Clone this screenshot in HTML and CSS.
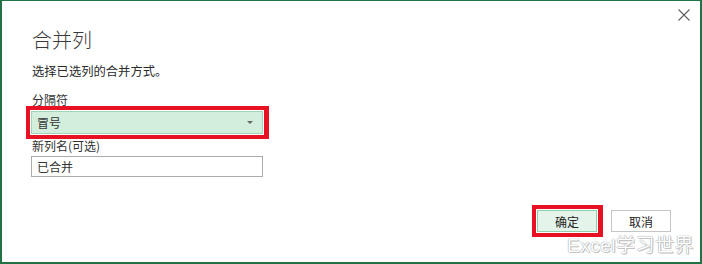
FILE: index.html
```html
<!DOCTYPE html>
<html lang="zh-CN">
<head>
<meta charset="utf-8">
<title>合并列</title>
<link rel="stylesheet" href="styles.css">
</head>
<body>
<div class="dialog">
  <div class="titlebar">
    <span class="close" aria-label="关闭">
      <svg width="12" height="12" viewBox="0 0 12 12"><path d="M0.5 0.5 L11.5 11.5 M11.5 0.5 L0.5 11.5" stroke="#5f5f5f" stroke-width="1.1" fill="none"/></svg>
    </span>
  </div>
  <div class="content">
    <h1 class="title">合并列</h1>
    <p class="desc">选择已选列的合并方式。</p>
    <div class="label">分隔符</div>
    <div class="mark mark-select">
      <div class="select">
        <span>冒号</span>
        <span class="arrow"></span>
      </div>
    </div>
    <div class="label label-name">新列名(可选)</div>
    <div class="input">已合并</div>
  </div>
  <div class="footer">
    <div class="mark">
      <div class="btn btn-ok">确定</div>
    </div>
    <div class="btn btn-cancel">取消</div>
  </div>
  <div class="watermark">Excel学习世界</div>
</div>
</body>
</html>
```
FILE: styles.css
```css
* { box-sizing: border-box; }
html, body { margin: 0; padding: 0; background: #fff; }
body {
  font-family: "Noto Sans CJK SC", "Noto Sans", sans-serif;
  color: #333;
  font-size: 12px;
}
.dialog {
  position: relative;
  width: 702px;
  height: 264px;
  border: 1px solid #217346;
  border-left-width: 2px;
  border-right-width: 2px;
  border-bottom-width: 2px;
  display: flex;
  flex-direction: column;
  overflow: hidden;
}
.titlebar {
  height: 20px;
  padding-top: 8px;
  padding-right: 10px;
  display: flex;
  justify-content: flex-end;
}
.close { display: block; width: 12px; height: 12px; }
.close svg { display: block; }
.content {
  padding-left: 30px;
  display: flex;
  flex-direction: column;
  align-items: flex-start;
}
.title {
  margin: 7px 0 0 0;
  font-size: 20px;
  line-height: 24px;
  font-weight: 300;
  color: #3a3a3a;
}
.desc {
  margin: 11px 0 0 0;
  font-size: 12.3px;
  line-height: 16px;
  color: #2b2b2b;
}
.label {
  margin-top: 15px;
  font-size: 12px;
  line-height: 12px;
}
.label-name { margin-top: 1px; }
.mark {
  border: 4px solid #e81123;
  border-right-width: 5px;
  padding: 1px;
  background: #fff;
}
.mark-select { margin-left: -6px; }
.select {
  width: 232px;
  height: 23px;
  border: 1px solid #9fd5b7;
  background: #d3eedd;
  display: flex;
  align-items: center;
  justify-content: space-between;
  padding: 0 9px 0 5px;
  font-size: 12px;
  line-height: 14px;
}
.arrow {
  width: 0;
  height: 0;
  border-left: 3px solid transparent;
  border-right: 3px solid transparent;
  border-top: 3px solid #666;
}
.input {
  margin-top: 4px;
  margin-left: -1px;
  width: 232px;
  height: 21px;
  border: 1px solid #ababab;
  padding: 0 5px;
  font-size: 12px;
  line-height: 19px;
}
.footer {
  margin-top: 28px;
  padding-right: 29px;
  display: flex;
  justify-content: flex-end;
  align-items: center;
  gap: 8px;
}
.btn {
  width: 60px;
  height: 22px;
  display: flex;
  align-items: center;
  justify-content: center;
  font-size: 12px;
  color: #222;
}
.btn-ok {
  background: #e5f4eb;
  border: 1px solid #8fcfa9;
}
.btn-cancel {
  background: #fff;
  border: 1px solid #c6c6c6;
}
.watermark {
  position: absolute;
  right: 6px;
  bottom: 5px;
  font-family: "Liberation Sans", "Noto Sans CJK SC", sans-serif;
  font-size: 19px;
  line-height: 22px;
  color: #fff;
  letter-spacing: 0.5px;
  text-shadow: 0 0 1px #999, 0 0 1px #aaa, 1px 1px 0 #ccc;
}
```
